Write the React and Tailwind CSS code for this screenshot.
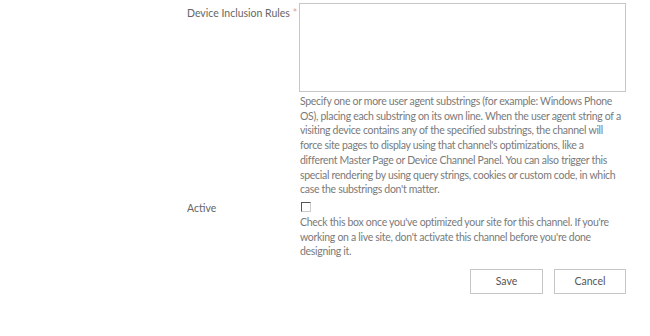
import React from 'react';

const font = { fontFamily: 'Lato, "Open Sans", "Liberation Sans", sans-serif' };

const rulesHelp = [
  'Specify one or more user agent substrings (for example: Windows Phone',
  'OS), placing each substring on its own line. When the user agent string of a',
  'visiting device contains any of the specified substrings, the channel will',
  "force site pages to display using that channel's optimizations, like a",
  'different Master Page or Device Channel Panel. You can also trigger this',
  'special rendering by using query strings, cookies or custom code, in which',
  "case the substrings don't matter.",
];

const activeHelp = [
  "Check this box once you've optimized your site for this channel. If you're",
  "working on a live site, don't activate this channel before you're done",
  'designing it.',
];

function Help({ lines, className = '' }) {
  return (
    <p className={`pl-[1px] text-[10.5px] leading-[14.7px] tracking-[-0.3px] text-[#7a7a7a] ${className}`}>
      {lines.map((l, i) => (
        <span key={i} className="block whitespace-nowrap">{l}</span>
      ))}
    </p>
  );
}

function Row({ label, required, children, className = '' }) {
  return (
    <div className={`flex ${className}`}>
      <div className="w-[112px] shrink-0 whitespace-nowrap pt-[3px] text-[10.5px] leading-[15px] text-[#666]">
        {label}
        {required && <span className="ml-[3px] text-[#d9a3a3]">*</span>}
      </div>
      <div className="w-[327px]">{children}</div>
    </div>
  );
}

export default function App() {
  return (
    <div className="w-[650px] h-[336px] bg-white pl-[187px] pt-[3px]" style={font}>
      <Row label="Device Inclusion Rules" required>
        <textarea className="block w-[327px] h-[89px] resize-none border border-[#c6c6c6] bg-white outline-none" />
        <Help lines={rulesHelp} className="mt-[2px]" />
      </Row>

      <Row label="Active" className="mt-[1px]">
        <div className="mt-[4px] ml-[2px] w-[10px] h-[10px] border border-t-[#555] border-l-[#555] border-b-[#ccc] border-r-[#ccc] bg-white" />
        <Help lines={activeHelp} className="mt-[3px]" />
      </Row>

      <div className="flex justify-end gap-[11px] w-[439px] mt-[10px]">
        <button className="w-[73px] h-[25px] border border-[#c6c6c6] bg-white text-[10.5px] text-[#555]">Save</button>
        <button className="w-[72px] h-[25px] border border-[#c6c6c6] bg-white text-[10.5px] text-[#555]">Cancel</button>
      </div>
    </div>
  );
}
